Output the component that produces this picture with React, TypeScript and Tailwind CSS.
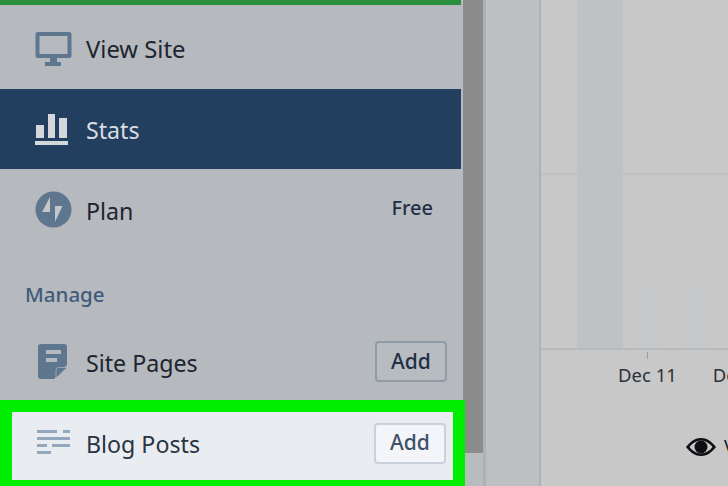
const font = { fontFamily: '"Noto Sans", sans-serif' };

function Row({ icon, label, right, light, labelClass }: { icon: React.ReactNode; label: string; right?: React.ReactNode; light?: boolean; labelClass?: string }) {
  return (
    <div className={`flex h-[80px] items-center pl-[35px] pr-[16px] ${light ? "text-white" : ""}`}>
      <div className="flex w-[51px] shrink-0 items-center">{icon}</div>
      <span className={`leading-none ${light ? "text-[#d9dde0]" : "text-[#1d2530]"} ${labelClass ?? ""}`}>{label}</span>
      <div className="ml-auto">{right}</div>
    </div>
  );
}

function Monitor() {
  return (
    <svg width="37" height="37" viewBox="0 0 37 37" fill="#5f768f">
      <path fillRule="evenodd" d="M3 1h31a2.500 2.500 0 0 1 2.500 2.500v21a2.500 2.500 0 0 1-2.500 2.500H22v4h4v4H10v-4h5v-4H3a2.500 2.500 0 0 1-2.500-2.500v-21A2.500 2.500 0 0 1 3 1zm1.500 4v18h28V5z" />
    </svg>
  );
}

function Bars() {
  return (
    <svg width="33" height="33" viewBox="0 0 33 33" fill="#d4d8db">
      <rect x="1" y="12" width="8" height="13" />
      <rect x="13" y="1" width="7" height="24" />
      <rect x="24" y="5" width="8" height="20" />
      <rect x="0" y="28" width="33" height="4" />
    </svg>
  );
}

function Bolt() {
  return (
    <svg width="37" height="37" viewBox="0 0 37 37">
      <circle cx="18.500" cy="18.500" r="18" fill="#5f768f" />
      <path d="M15 6 L7 21 L15 21 Z M27.500 15 L20 15 L20 31 Z" fill="#c3c7cb" />
    </svg>
  );
}

function Page() {
  return (
    <svg width="30" height="36" viewBox="0 0 30 36" className="ml-[3px] mb-[3px]">
      <path fillRule="evenodd" fill="#5f768f" d="M3 0h23a3 3 0 0 1 3 3v18L16 35H3a3 3 0 0 1-3-3V3a3 3 0 0 1 3-3zm5 6v4h15V6zm0 8v4h11v-4z" />
      <path d="M18 34V26a2.500 2.500 0 0 1 2.500-2.500H29z" fill="#5f768f" stroke="#aab1b8" strokeWidth="0.800" />
    </svg>
  );
}

function Lines() {
  return (
    <svg width="34" height="25" viewBox="0 0 34 25" fill="#93a8bd">
      <rect x="0" y="0" width="20" height="3" />
      <rect x="26" y="0" width="7" height="3" />
      <rect x="0" y="7" width="33" height="3" />
      <rect x="0" y="14" width="10" height="3" />
      <rect x="15" y="14" width="18" height="3" />
      <rect x="0" y="21" width="14" height="3" />
    </svg>
  );
}

function AddButton({ light }: { light?: boolean }) {
  return (
    <button
      className={`flex h-[41px] w-[72px] items-center justify-center rounded-[4px] border-2 text-[21px] font-medium ${
        light ? "border-[#c9d2dc] bg-[#f3f5f8] text-[#3d5068]" : "border-[#8f9ba6] bg-[#b7bcc0] pt-[1px] text-[#1f2f47] mb-[4px]"
      }`}
    >
      Add
    </button>
  );
}

function Bar({ className }: { className: string }) {
  return <div className={className} />;
}

export default function App() {
  return (
    <div className="relative flex h-[486px] w-[728px] overflow-hidden bg-[#bcc0c0]" style={font}>
      <div className="w-[463px] shrink-0 bg-[#b6b9bd]">
        <div className="mr-[2px] h-[5px] bg-[#2a8f3a]" />
        <div className="mt-[4px]">
          <Row icon={<Monitor />} label="View Site" labelClass="pt-[2px] text-[23.800px]" />
        </div>
        <div className="mr-[2px] bg-[#233f5f]">
          <Row icon={<Bars />} label="Stats" light labelClass="pt-[4px] text-[23.200px]" />
        </div>
        <Row
          icon={<Bolt />}
          label="Plan"
          labelClass="pt-[6px] text-[23.200px]"
          right={<span className="mr-[14px] block pb-[3px] text-[20px] font-medium text-[#1f2f47]">Free</span>}
        />
        <div className="mt-[31px] pl-[25px] text-[20.500px] font-medium leading-[28px] text-[#3f5b7a]">Manage</div>
        <div className="mt-[15px]">
          <Row icon={<Page />} label="Site Pages" labelClass="pt-[2px] text-[23.200px]" right={<AddButton />} />
        </div>
      </div>

      <div className="flex w-[20px] shrink-0 flex-col">
        <div className="h-[453px] bg-[#8c8c8c]" />
        <div className="flex-1 bg-[#b9bcbc]" />
      </div>

      <div className="w-[3px] shrink-0 bg-[#adb1b2]" />
      <div className="w-[55px] shrink-0 border-r-2 border-[#adb2b4] bg-[#bcc0c0]" />

      <div className="relative flex-1 bg-[#c8c8c8]">
        <div className="flex h-[350px] items-end border-b-2 border-[#b5b9bc] pl-[36px]">
          <Bar className="h-full w-[46px] bg-[#bfc1c4]" />
          <Bar className="ml-[8px] h-[62px] w-[31px] bg-[#c5c7c8]" />
          <Bar className="ml-[16px] h-[62px] w-[31px] bg-[#c5c7c8]" />
        </div>
        <div className="absolute left-0 right-0 top-[173px] h-[2px] bg-[#bdc1c3]" />
        <div className="absolute left-[106px] top-[352px] h-[7px] w-[1px] bg-[#9a9d9f]" />
        <div className="mt-[13px] flex whitespace-nowrap pl-[77px] text-[18.500px] leading-[24px] text-[#2b3138]">
          <span>Dec 11</span>
          <span className="ml-[36px]">Dec 12</span>
        </div>
        <div className="absolute left-[145px] top-[433px] flex items-center gap-[8px] whitespace-nowrap text-[18px] text-[#15181c]">
          <svg width="30" height="24" viewBox="0 0 30 24" fill="#0d0f12">
            <path fillRule="evenodd" d="M15 3C8 3 3 8 0 12c3 4 8 9 15 9s12-5 15-9c-3-4-8-9-15-9zm0 2.500c4.500 0 9 3 11.500 6.500-2.500 3.500-7 6.500-11.500 6.500S6 15.500 3.500 12C6 8.500 10.500 5.500 15 5.500z" />
            <circle cx="15" cy="12" r="6.500" />
          </svg>
          <span>Views</span>
        </div>
      </div>

      <div className="absolute bottom-0 left-0 flex h-[86px] w-[465px] items-center border-x-[12px] border-b-[6px] border-t-[12px] border-[#00ee00] bg-[#e9edf1] pl-[25px] pr-[7px]">
        <div className="flex w-[49px] shrink-0 items-center pb-[8px]">
          <Lines />
        </div>
        <span className="pb-[2px] text-[23.200px] leading-none text-[#2a3442]">Blog Posts</span>
        <div className="ml-auto pb-[6px]">
          <AddButton light />
        </div>
      </div>
    </div>
  );
}
